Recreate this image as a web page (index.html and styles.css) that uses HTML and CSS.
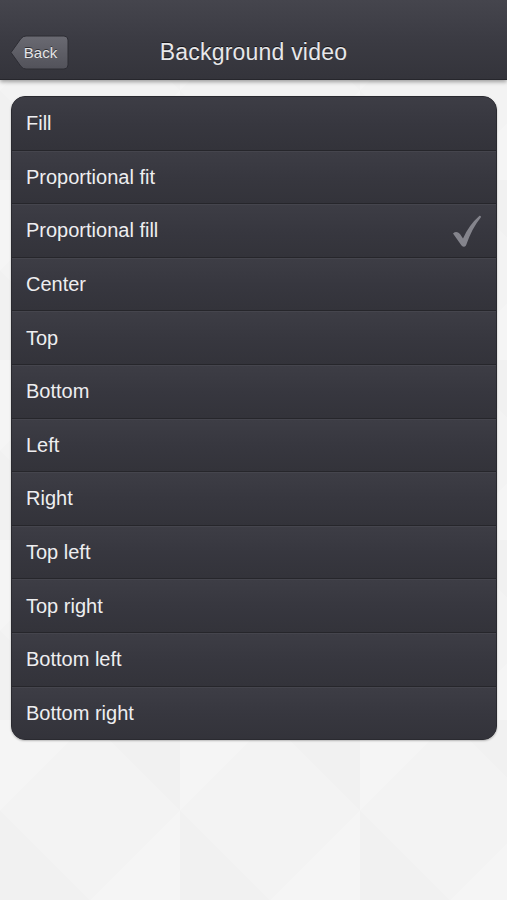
FILE: index.html
```html
<!DOCTYPE html>
<html lang="en">
<head>
  <meta charset="UTF-8">
  <meta name="viewport" content="width=device-width, initial-scale=1.0">
  <title>Background video</title>
  <link rel="stylesheet" href="styles.css">
</head>
<body>
  <div class="nav-bar">
    <div class="back-btn">
      <svg class="back-shape" width="60" height="35" viewBox="0 0 60 35">
        <defs>
          <linearGradient id="backGrad" x1="0" y1="0" x2="0" y2="1">
            <stop offset="0" stop-color="#6a6a72"/>
            <stop offset="1" stop-color="#52525a"/>
          </linearGradient>
        </defs>
        <path d="M1 17.5 L11 3.5 Q13 1 16 1 L54 1 Q58 1 58 5 L58 30 Q58 34 54 34 L16 34 Q13 34 11 31.5 Z" fill="url(#backGrad)" stroke="#2c2c33" stroke-width="1"/>
      </svg>
      <span class="back-label">Back</span>
    </div>
    <div class="nav-title">Background video</div>
  </div>

  <div class="options">
    <div class="option">Fill</div>
    <div class="option">Proportional fit</div>
    <div class="option selected">Proportional fill
      <svg class="check" width="30" height="33" viewBox="0 0 30 33">
        <path d="M1 18.5 Q4.5 15.5 8 19 L11 23.5 Q17 10 27.5 0.8 Q29.5 0.5 28.8 2.5 Q20 13 14 30.5 Q12 33 9.5 30.5 Z" fill="#84848c"/>
      </svg>
    </div>
    <div class="option">Center</div>
    <div class="option">Top</div>
    <div class="option">Bottom</div>
    <div class="option">Left</div>
    <div class="option">Right</div>
    <div class="option">Top left</div>
    <div class="option">Top right</div>
    <div class="option">Bottom left</div>
    <div class="option">Bottom right</div>
  </div>
</body>
</html>
```

FILE: styles.css
```css
body {
  margin: 0;
  height: 900px;
  overflow: hidden;
  font-family: "Liberation Sans", Arial, sans-serif;
  background-color: #f3f3f3;
  background-image:
    linear-gradient(45deg, rgba(0,0,0,0.008) 25%, transparent 25%, transparent 75%, rgba(0,0,0,0.008) 75%),
    linear-gradient(-45deg, rgba(255,255,255,0.2) 25%, transparent 25%, transparent 75%, rgba(255,255,255,0.2) 75%);
  background-size: 180px 180px;
}

.nav-bar {
  height: 80px;
  box-sizing: border-box;
  padding-top: 35px;
  display: flex;
  align-items: flex-start;
  background: linear-gradient(to bottom, #45454d 0%, #3b3b43 50%, #34343b 100%);
  border-bottom: 1px solid #26262c;
  box-shadow: 0 2px 4px rgba(0, 0, 0, 0.35);
  position: relative;
}

.back-btn {
  position: relative;
  width: 60px;
  height: 35px;
  margin-left: 10px;
}

.back-shape {
  display: block;
}

.back-label {
  position: absolute;
  top: 9px;
  left: 8px;
  width: 45px;
  text-align: center;
  color: #e6e6e8;
  font-size: 15px;
  text-shadow: 0 -1px 0 rgba(0, 0, 0, 0.5);
}

.nav-title {
  flex: 1;
  text-align: center;
  margin-right: 70px;
  margin-top: 4px;
  color: #e8e8ea;
  font-size: 23px;
  letter-spacing: 0.2px;
  text-shadow: 0 -1px 0 rgba(0, 0, 0, 0.6);
}

.options {
  margin: 16px 10px 0 11px;
  border-radius: 14px;
  overflow: hidden;
  border: 1px solid #2a2a30;
  box-shadow: 0 1px 2px rgba(0, 0, 0, 0.25);
  background: #36363e;
}

.option {
  height: 51.6px;
  display: flex;
  align-items: center;
  justify-content: space-between;
  padding: 0 14px 0 14px;
  color: #eeeef0;
  font-size: 20px;
  background: linear-gradient(to bottom, #3d3d45 0%, #37373f 50%, #33333a 100%);
  border-top: 1px solid #45454d;
  border-bottom: 1px solid #26262b;
}

.option:first-child {
  border-top-color: #3d3d45;
}

.option:last-child {
  border-bottom: none;
}

.check {
  display: block;
  margin-top: 2px;
}
```
